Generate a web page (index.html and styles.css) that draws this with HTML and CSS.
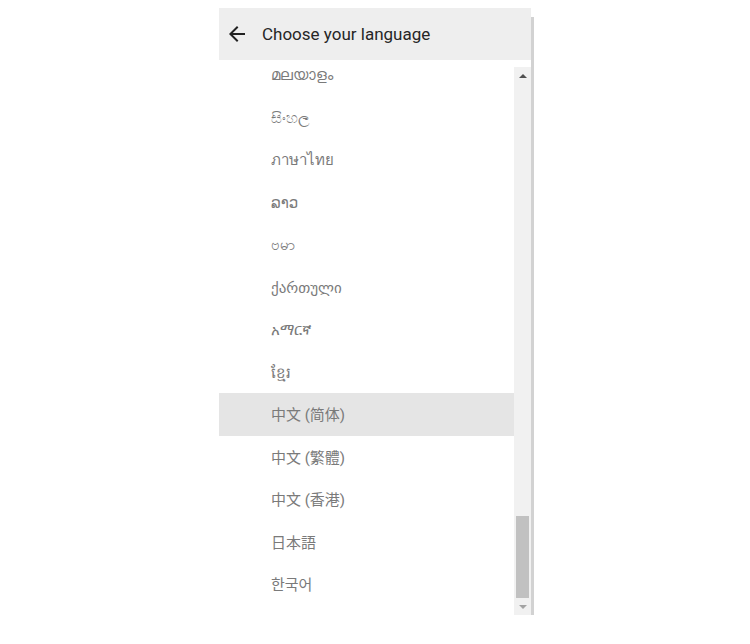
FILE: index.html
```html
<!DOCTYPE html>
<html>
<head>
<meta charset="utf-8">
<link rel="stylesheet" href="styles.css">
</head>
<body>
<div class="panel">
  <div class="main">
    <div class="header">
      <svg class="back" viewBox="0 0 24 24" width="24" height="24"><path d="M20 11H7.83l5.59-5.59L12 4l-8 8 8 8 1.41-1.41L7.83 13H20v-2z" fill="#212121"/></svg>
      <span class="title">Choose your language</span>
    </div>
    <div class="body">
      <div class="viewport">
        <ul class="list">
          <li>മലയാളം</li>
          <li>සිංහල</li>
          <li>ภาษาไทย</li>
          <li>ລາວ</li>
          <li>ဗမာ</li>
          <li>ქართული</li>
          <li>አማርኛ</li>
          <li>ខ្មែរ</li>
          <li class="active">中文 (简体)</li>
          <li>中文 (繁體)</li>
          <li>中文 (香港)</li>
          <li lang="ja">日本語</li>
          <li lang="ko">한국어</li>
        </ul>
      </div>
      <div class="scrollbar">
        <div class="sb-btn"><span class="tri-up"></span></div>
        <div class="sb-track"><div class="sb-thumb"></div></div>
        <div class="sb-btn"><span class="tri-down"></span></div>
      </div>
    </div>
  </div>
  <div class="edge"></div>
</div>
</body>
</html>
```
FILE: styles.css
```css
html, body {
  margin: 0;
  padding: 0;
  background: #ffffff;
}
body {
  font-family: "Roboto", "Noto Sans", "Noto Sans CJK SC", "DejaVu Sans", sans-serif;
}
.panel {
  display: flex;
  margin: 8px 0 0 219px;
  width: 316px;
}
.main {
  width: 312px;
  display: flex;
  flex-direction: column;
}
.edge {
  width: 3px;
  margin-top: 9px;
  height: 598px;
  background: #d2d2d2;
}
.header {
  height: 52px;
  background: #eeeeee;
  display: flex;
  align-items: center;
  padding-left: 6px;
}
.back {
  display: block;
  flex: none;
}
.title {
  margin-left: 13px;
  font-size: 17px;
  color: #262626;
}
.body {
  display: flex;
  height: 555px;
}
.viewport {
  flex: 1;
  overflow: hidden;
}
.list {
  list-style: none;
  margin: -7px 0 0 0;
  padding: 0;
}
.list li {
  height: 42.5px;
  line-height: 44px;
  padding-left: 52px;
  font-size: 15px;
  color: #7a7a7a;
  white-space: nowrap;
  overflow: hidden;
}
.list li[lang="ja"] { font-family: "Roboto", "Noto Sans CJK JP", sans-serif; }
.list li[lang="ko"] { font-family: "Roboto", "Noto Sans CJK KR", sans-serif; }
.list li.active {
  background: #e5e5e5;
}
.scrollbar {
  width: 17px;
  margin-top: 7px;
  height: 548px;
  background: #f1f1f1;
  display: flex;
  flex-direction: column;
}
.sb-btn {
  height: 17px;
  display: flex;
  align-items: center;
  justify-content: center;
  flex: none;
}
.tri-up {
  width: 0;
  height: 0;
  border-left: 4px solid transparent;
  border-right: 4px solid transparent;
  border-bottom: 4px solid #505050;
}
.tri-down {
  width: 0;
  height: 0;
  border-left: 4px solid transparent;
  border-right: 4px solid transparent;
  border-top: 4px solid #a3a3a3;
}
.sb-track {
  flex: 1;
  display: flex;
  flex-direction: column;
  justify-content: flex-end;
}
.sb-thumb {
  margin: 0 2px;
  height: 82px;
  background: #c1c1c1;
}
```
